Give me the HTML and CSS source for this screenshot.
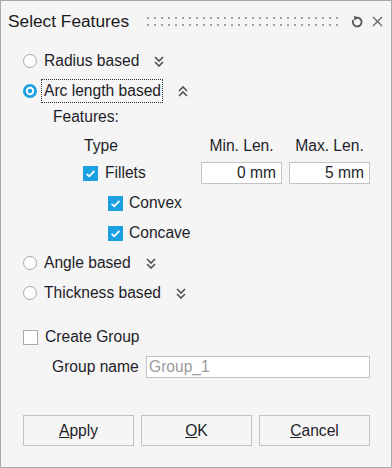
FILE: index.html
```html
<!DOCTYPE html>
<html>
<head>
<meta charset="utf-8">
<link rel="stylesheet" href="styles.css">
</head>
<body>
<div class="dialog">
  <div class="titlebar">
    <span class="title">Select Features</span>
    <span class="grip"></span>
    <svg class="reset" width="13" height="13" viewBox="0 0 13 13"><path d="M5 2.8 A4.4 4.4 0 1 1 2.3 5" stroke="#555" stroke-width="1.8" fill="none"/><path d="M3 0.4 L7.2 2.9 L3.4 5.6 Z" fill="#555"/></svg>
    <svg class="close" width="11" height="11" viewBox="0 0 11 11"><path d="M1 1L10 10M10 1L1 10" stroke="#666" stroke-width="1.3"/></svg>
  </div>

  <div class="content">
    <div class="row opt">
      <span class="radio"></span>
      <span class="label">Radius based</span>
      <svg class="chev" width="10" height="11" viewBox="0 0 10 11"><path d="M1 1l4 4 4-4M1 6l4 4 4-4" stroke="#555" stroke-width="1.7" fill="none"/></svg>
    </div>
    <div class="row opt">
      <svg class="radio-on" width="14" height="14" viewBox="0 0 14 14"><circle cx="7" cy="7" r="7" fill="#1ba1e2"/><circle cx="7" cy="7" r="4.2" fill="#fff"/><circle cx="7" cy="7" r="2.3" fill="#1ba1e2"/></svg>
      <span class="label focus">Arc length based</span>
      <svg class="chev" width="10" height="11" viewBox="0 0 10 11"><path d="M1 5l4-4 4 4M1 10l4-4 4 4" stroke="#555" stroke-width="1.7" fill="none"/></svg>
    </div>

    <div class="row features">Features:</div>
    <div class="row header">
      <span class="col-type">Type</span>
      <span class="col-min">Min. Len.</span>
      <span class="col-max">Max. Len.</span>
    </div>
    <div class="row sub fillets">
      <span class="check on"></span>
      <span class="label fl">Fillets</span>
      <span class="input num">0 mm</span>
      <span class="input num">5 mm</span>
    </div>
    <div class="row sub nested">
      <span class="check on"></span>
      <span class="label">Convex</span>
    </div>
    <div class="row sub nested">
      <span class="check on"></span>
      <span class="label">Concave</span>
    </div>

    <div class="row opt">
      <span class="radio"></span>
      <span class="label">Angle based</span>
      <svg class="chev" width="10" height="11" viewBox="0 0 10 11"><path d="M1 1l4 4 4-4M1 6l4 4 4-4" stroke="#555" stroke-width="1.7" fill="none"/></svg>
    </div>
    <div class="row opt">
      <span class="radio"></span>
      <span class="label">Thickness based</span>
      <svg class="chev" width="10" height="11" viewBox="0 0 10 11"><path d="M1 1l4 4 4-4M1 6l4 4 4-4" stroke="#555" stroke-width="1.7" fill="none"/></svg>
    </div>

    <div class="row group">
      <span class="check"></span>
      <span class="label">Create Group</span>
    </div>
    <div class="row gname">
      <span class="label">Group name</span>
      <span class="input name">Group_1</span>
    </div>

    <div class="buttons">
      <button class="btn"><u>A</u>pply</button>
      <button class="btn"><u>O</u>K</button>
      <button class="btn"><u>C</u>ancel</button>
    </div>
  </div>
</div>
</body>
</html>
```

FILE: styles.css
```css
* { box-sizing: border-box; }
html, body { margin: 0; padding: 0; }
body {
  font-family: "Liberation Sans", Arial, sans-serif;
  font-size: 15.6px;
  color: #1e1e28;
  background: #f5f5f5;
}
.dialog {
  width: 392px;
  height: 468px;
  border: 1px solid #a9a9a9;
  background: #f5f5f5;
}
.titlebar {
  height: 39px;
  display: flex;
  align-items: center;
  padding-left: 7px;
  padding-top: 2px;
}
.title {
  font-size: 17.3px;
  color: #1a1a1a;
  width: 139px;
  flex: none;
}
.grip {
  width: 192px;
  height: 9px;
  margin-right: 12px;
  flex: none;
  background-image:
    linear-gradient(90deg, #a0a0a0 0 2px, transparent 2px 7px),
    linear-gradient(90deg, #a0a0a0 0 2px, transparent 2px 7px);
  background-size: 7px 2px, 7px 2px;
  background-position: 0 0, 0 7px;
  background-repeat: repeat-x, repeat-x;
}
.reset { margin-right: 8px; flex: none; }
.close { flex: none; }

.content {
  padding-left: 22px;
  padding-top: 6px;
}
.row {
  display: flex;
  align-items: center;
  height: 30px;
}
.radio {
  width: 14px;
  height: 14px;
  border-radius: 50%;
  border: 1px solid #a8a8a8;
  background: #fff;
  flex: none;
  margin-right: 7px;
}
.radio-on {
  flex: none;
  margin-right: 4px;
}
.chev { margin-left: 15px; margin-top: 1px; flex: none; }
.label.focus {
  border: 1px dotted #333;
  height: 24px;
  line-height: 22px;
  padding: 0 1px 0 2px;
}
.features {
  height: 22px;
  padding-left: 30px;
}
.header {
  height: 30px;
  padding-top: 6px;
}
.col-type { margin-left: 61px; width: 117px; }
.col-min { width: 81px; margin-right: 7px; text-align: center; }
.col-max { width: 81px; text-align: center; }
.check {
  width: 15px;
  height: 15px;
  border: 1px solid #ababab;
  background: #fff;
  flex: none;
  margin-right: 7px;
}
.check.on {
  border: none;
  background: #1ba1e2 url("data:image/svg+xml,%3Csvg xmlns='http://www.w3.org/2000/svg' width='15' height='15'%3E%3Cpath d='M3.6 7.8 L6.3 10.3 L11.4 4.8' stroke='white' stroke-width='1.8' fill='none'/%3E%3C/svg%3E") no-repeat center;
}
.fillets { padding-left: 60px; }
.fillets .fl { width: 96px; }
.input {
  height: 22px;
  border: 1px solid #c4c4c4;
  background: #fff;
  line-height: 20px;
  padding: 0 5px;
  flex: none;
}
.input.num {
  width: 81px;
  text-align: right;
  margin-right: 7px;
}
.nested { padding-left: 85px; }
.nested .check { margin-right: 6px; }
.group { margin-top: 14px; }
.gname { padding-left: 29px; }
.gname .label { width: 94px; }
.input.name {
  width: 224px;
  color: #9a9a9a;
  padding-left: 2px;
}
.buttons {
  display: flex;
  gap: 7px;
  margin-top: 33px;
}
.btn {
  width: 111px;
  height: 31px;
  border: 1px solid #c2c2c2;
  background: #f5f5f5;
  font-family: "Liberation Sans", Arial, sans-serif;
  font-size: 15.6px;
  color: #1e1e28;
  padding: 0;
}
```
